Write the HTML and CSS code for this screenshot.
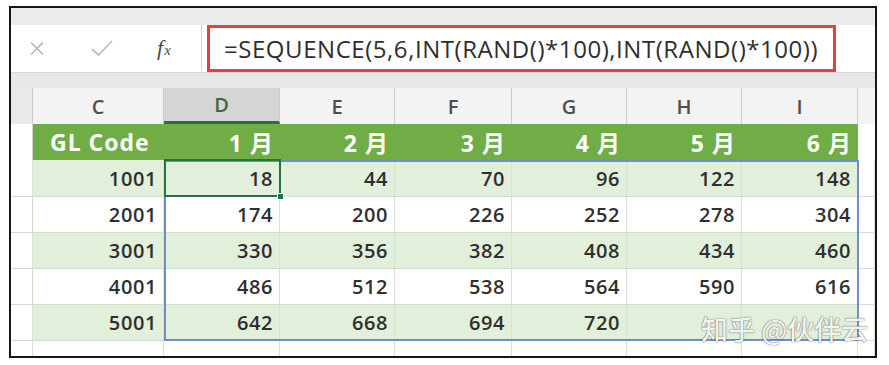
FILE: index.html
```html
<!DOCTYPE html>
<html lang="zh-CN">
<head>
  <meta charset="UTF-8">
  <title>SEQUENCE</title>
  <link rel="stylesheet" href="styles.css">
</head>
<body>
<div class="frame">
  <div class="band-top"></div>

  <!-- 编辑栏 -->
  <div class="formula-bar">
    <div class="controls">
      <span class="ctl ctl-x">
        <svg width="16" height="15" viewBox="0 0 16 15"><path d="M2 1.5 L14 13.5 M14 1.5 L2 13.5" stroke="#b4b4b4" stroke-width="1.6" fill="none"/></svg>
      </span>
      <span class="ctl ctl-ok">
        <svg width="24" height="18" viewBox="0 0 24 18"><path d="M2 10 L8.5 16 L22 2" stroke="#bdbdbd" stroke-width="1.8" fill="none"/></svg>
      </span>
      <span class="ctl ctl-fx">f<span class="fx-x">x</span></span>
    </div>
    <div class="formula">=SEQUENCE(5,6,INT(RAND()*100),INT(RAND()*100))</div>
  </div>

  <div class="band-mid"></div>

  <div class="sheet">
    <div class="r colhead">
      <div class="c rn"></div>
      <div class="c">C</div>
      <div class="c sel">D</div>
      <div class="c">E</div>
      <div class="c">F</div>
      <div class="c">G</div>
      <div class="c">H</div>
      <div class="c">I</div>
      <div class="c tail"></div>
    </div>

    <div class="r hdr">
      <div class="c rn"></div>
      <div class="c first">GL Code</div>
      <div class="c">1 月</div>
      <div class="c">2 月</div>
      <div class="c">3 月</div>
      <div class="c">4 月</div>
      <div class="c">5 月</div>
      <div class="c">6 月</div>
      <div class="c tail"></div>
    </div>

    <div class="body">
      <div class="r data band tall">
        <div class="c rn"></div>
        <div class="c">1001</div><div class="c">18</div><div class="c">44</div><div class="c">70</div><div class="c">96</div><div class="c">122</div><div class="c">148</div>
        <div class="c tail"></div>
      </div>
      <div class="r data">
        <div class="c rn"></div>
        <div class="c">2001</div><div class="c">174</div><div class="c">200</div><div class="c">226</div><div class="c">252</div><div class="c">278</div><div class="c">304</div>
        <div class="c tail"></div>
      </div>
      <div class="r data band">
        <div class="c rn"></div>
        <div class="c">3001</div><div class="c">330</div><div class="c">356</div><div class="c">382</div><div class="c">408</div><div class="c">434</div><div class="c">460</div>
        <div class="c tail"></div>
      </div>
      <div class="r data">
        <div class="c rn"></div>
        <div class="c">4001</div><div class="c">486</div><div class="c">512</div><div class="c">538</div><div class="c">564</div><div class="c">590</div><div class="c">616</div>
        <div class="c tail"></div>
      </div>
      <div class="r data band">
        <div class="c rn"></div>
        <div class="c">5001</div><div class="c">642</div><div class="c">668</div><div class="c">694</div><div class="c">720</div><div class="c"></div><div class="c"></div>
        <div class="c tail"></div>
      </div>
      <div class="r empty">
        <div class="c rn"></div>
        <div class="c"></div><div class="c"></div><div class="c"></div><div class="c"></div><div class="c"></div><div class="c"></div><div class="c"></div>
        <div class="c tail"></div>
      </div>

      <!-- 选区 -->
      <div class="range"></div>
      <div class="active"><span class="handle"></span></div>
    </div>
  </div>

  <div class="watermark">知乎 @伙伴云</div>
</div>
</body>
</html>
```

FILE: styles.css
```css
* {
  margin: 0;
  padding: 0;
  box-sizing: border-box;
}

body {
  background: #fff;
  font-family: "Open Sans", "Noto Sans CJK SC", sans-serif;
}

.frame {
  position: relative;
  width: 868px;
  height: 352px;
  margin: 6px 0 0 9px;
  border: 2px solid #161616;
  background: #fff;
  overflow: hidden;
}

.band-top {
  height: 17px;
  background: #ebebeb;
}

.band-mid {
  height: 16px;
  background: #e8e8e8;
  border-top: 1px solid #d6d6d6;
}

/* 编辑栏 */
.formula-bar {
  display: flex;
  height: 47px;
  background: #fff;
}

.controls {
  display: flex;
  align-items: center;
  width: 191px;
  height: 46px;
  padding-left: 18px;
  border-right: 1px solid #d4d4d4;
}

.ctl {
  display: flex;
  align-items: center;
  justify-content: center;
}

.ctl-ok {
  margin-left: 45px;
}

.ctl-fx {
  align-items: baseline;
  margin-left: 43px;
  font-family: "Liberation Serif", serif;
  font-style: italic;
  font-size: 22px;
  color: #4a4a4a;
}

.fx-x {
  font-size: 15px;
  margin-left: 1px;
}

.formula {
  display: flex;
  align-items: center;
  width: 629px;
  height: 47px;
  margin-left: 5px;
  padding-left: 14px;
  border: 3px solid #e2413c;
  font-size: 24px;
  letter-spacing: 0.55px;
  color: #2e2e2e;
  white-space: nowrap;
}

/* 表格 */
.r {
  display: grid;
  grid-template-columns: 22px 131px 116px 115px 117px 115px 115px 116px 1fr;
}

.c {
  display: flex;
  align-items: center;
  justify-content: flex-end;
  padding-right: 6px;
}

.colhead {
  height: 36px;
  background: #f3f3f3;
}

.colhead .c {
  justify-content: center;
  padding: 0;
  font-size: 20px;
  font-weight: 600;
  color: #4e4e4e;
  border-right: 1px solid #cdcdcd;
}

.colhead .rn {
  background: #e9e9e9;
}

.colhead .tail {
  border-right: none;
}

.colhead .sel {
  background: #d5d5d5;
  color: #3e6a3e;
  border-bottom: 3px solid #217346;
}

.hdr {
  height: 36px;
}

.hdr .c {
  background: #70ad47;
  color: #fff;
  font-size: 23px;
  font-weight: 700;
  letter-spacing: 1px;
  padding-right: 6px;
}

.hdr .first {
  justify-content: flex-start;
  padding-left: 17px;
}

.hdr .rn {
  background: #fff;
  border-right: 1px solid #d2d2d2;
}

.hdr .tail {
  background: #fff;
}

.body {
  position: relative;
}

.data {
  height: 36px;
}

.data.tall {
  height: 37px;
}

.data .c {
  font-size: 20px;
  font-weight: 600;
  letter-spacing: 0.6px;
  color: #2f2f2f;
  border-bottom: 1px solid #d3dccb;
  border-right: 1px solid #dcdcdc;
}

.data.band .c {
  background: #e2efda;
  border-right-color: #d6e4cb;
}

.data .rn,
.data.band .rn,
.data .tail,
.data.band .tail {
  background: #fff;
  border-bottom-color: #dadada;
}

.data .rn {
  border-right-color: #cfe0c2;
}

.empty {
  height: 15px;
}

.empty .c {
  border-right: 1px solid #dcdcdc;
}

/* 选区 */
.range {
  position: absolute;
  left: 153px;
  top: 0;
  width: 695px;
  height: 181px;
  border: 2px solid #6d8ecb;
  pointer-events: none;
}

.active {
  position: absolute;
  left: 153px;
  top: -1px;
  width: 117px;
  height: 38px;
  border: 2px solid #217346;
}

.handle {
  position: absolute;
  right: -5px;
  bottom: -5px;
  width: 7px;
  height: 7px;
  background: #217346;
  border: 1px solid #fff;
}

.watermark {
  position: absolute;
  left: 690px;
  top: 301px;
  font-family: "Noto Sans CJK SC", sans-serif;
  font-size: 27px;
  font-weight: 500;
  color: rgba(255, 255, 255, 0.95);
  text-shadow: 0 0 1px rgba(0, 0, 0, 0.7), 0 0 2px rgba(0, 0, 0, 0.25);
  white-space: nowrap;
}
```
